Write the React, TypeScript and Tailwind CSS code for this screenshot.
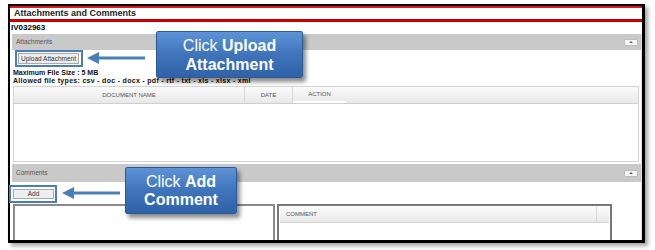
import React from "react";

const font = "font-['Liberation_Sans',Arial,sans-serif]";

function LeftArrow({ className }: { className: string }) {
  return (
    <svg className={className} width="60" height="14" viewBox="0 0 60 14">
      <polygon points="1,7 13,1 13,5.5 59,5.5 59,8.5 13,8.5 13,13" fill="#4a7ebb" />
    </svg>
  );
}

function Callout({ className, children }: { className: string; children: React.ReactNode }) {
  return (
    <div
      className={`absolute flex flex-col items-center justify-center rounded-[2px] border border-[#2c5a96] bg-gradient-to-b from-[#5d93d6] via-[#3f74bb] to-[#2f62a8] text-[16px] text-white shadow-[3px_4px_4px_rgba(0,0,0,0.45)] ${className}`}
    >
      {children}
    </div>
  );
}

function Collapse() {
  return (
    <div className="flex h-[7px] w-[14px] items-center justify-center rounded-[1px] border border-[#bbb] bg-[#f6f6f6]">
      <div className="h-0 w-0 border-x-[2px] border-b-[2px] border-x-transparent border-b-[#666]" />
    </div>
  );
}

export default function App() {
  return (
    <div className={`relative h-[250px] w-[655px] overflow-hidden bg-white pl-[8px] pt-[4px] ${font}`}>
      <div className="h-[239px] w-[637px] overflow-hidden border-b-[3px] border-l-2 border-r-[3px] border-t-2 border-black bg-white shadow-[3px_3px_4px_rgba(0,0,0,0.35)]">
        <div className="h-[2px] bg-[#e01818]" />
        <div className="flex h-[11px] items-center pl-[4px] text-[9px] font-bold text-[#222]">Attachments and Comments</div>
        <div className="h-[3px] bg-[#c80000]" />
        <div className="h-[12px] pl-[1px] text-[8px] font-bold leading-[12px] text-black">IV032963</div>

        <div className="ml-[2px] border-r border-[#ddd]">
          <div className="flex h-[16px] items-center justify-between bg-[#c9c9c9] pl-[4px] pr-[3px]">
            <span className="text-[6.5px] text-[#555]">Attachments</span>
            <Collapse />
          </div>

          <div className="flex h-[17px] items-center pl-[6px]">
            <div className="flex h-[11px] w-[61px] items-center justify-center border border-[#aaa] bg-[#eee] text-[6.5px] text-[#333]">
              Upload Attachment
            </div>
          </div>

          <div className="mt-[2px] pl-[1px] text-[7px] font-bold leading-[8px] text-[#111]">
            <div>Maximum File Size : 5 MB</div>
            <div className="tracking-[0.3px]">Allowed file types: csv - doc - docx - pdf - rtf - txt - xls - xlsx - xml</div>
          </div>

          <div className="ml-[1px] mr-[2px] mt-[1px] border border-[#d4d4d4]">
            <div className="flex h-[17px] border-b border-[#cfcfcf] bg-gradient-to-b from-[#fbfbfb] to-[#e8e8e8] text-[6px] text-[#555]">
              <div className="flex w-[231px] items-center justify-center border-r border-[#d6d6d6]">DOCUMENT NAME</div>
              <div className="flex w-[48px] items-center justify-center border-r border-[#d6d6d6]">DATE</div>
              <div className="flex w-[53px] items-center justify-center border-b-2 border-white">ACTION</div>
              <div className="flex-1" />
            </div>
            <div className="h-[57px] bg-white" />
          </div>

          <div className="mt-[2px] flex h-[18px] items-center justify-between bg-[#c9c9c9] pl-[4px] pr-[3px]">
            <span className="text-[6.5px] text-[#555]">Comments</span>
            <Collapse />
          </div>

          <div className="mt-[7px] pl-[1px]">
            <div className="flex h-[10px] w-[41px] items-center justify-center border border-[#aaa] bg-[#eee] text-[6.5px] text-[#333]">
              Add
            </div>
          </div>

          <div className="mt-[5px] flex pl-[1px]">
            <div className="h-[60px] w-[262px] border-2 border-[#8a8a8a] bg-white" />
            <div className="ml-[2px] h-[60px] w-[335px] border-2 border-[#777] bg-white p-[1px]">
              <div className="flex h-[16px] border-b border-[#d4d4d4] bg-gradient-to-b from-[#fbfbfb] to-[#e9e9e9] text-[6px] text-[#555]">
                <div className="flex flex-1 items-center border-r border-[#d6d6d6] pl-[6px]">COMMENT</div>
                <div className="w-[12px]" />
              </div>
            </div>
          </div>
        </div>
      </div>

      {/* annotations */}
      <div className="absolute left-[15px] top-[50px] h-[17px] w-[68px] border-2 border-[#4a7ebb]" />
      <LeftArrow className="absolute left-[86px] top-[51px]" />
      <Callout className="left-[156px] top-[31px] h-[47px] w-[147px] leading-[19px]">
        <div>
          Click <b>Upload</b>
        </div>
        <b>Attachment</b>
      </Callout>

      <div className="absolute left-[9px] top-[185px] h-[18px] w-[48px] border-2 border-[#4a7ebb]" />
      <LeftArrow className="absolute left-[61px] top-[186px]" />
      <Callout className="left-[125px] top-[167px] h-[47px] w-[112px] leading-[18px]">
        <div>
          Click <b>Add</b>
        </div>
        <b>Comment</b>
      </Callout>
    </div>
  );
}
